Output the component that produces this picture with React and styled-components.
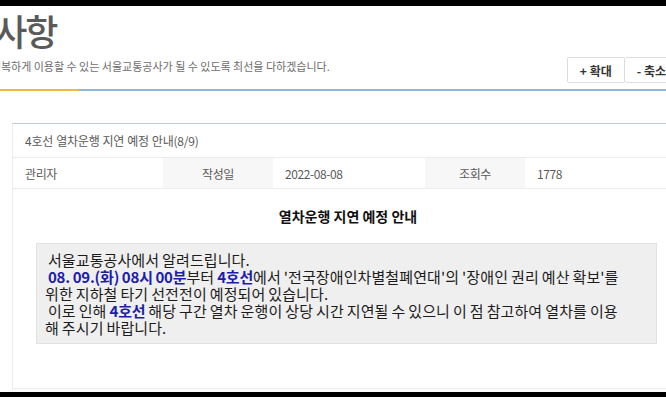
import React from 'react';
import styled, {createGlobalStyle} from "styled-components";

const palette = {
    ink: '#1c1c1c',
    grey: '#5a5a5a',
    soft: '#6d6d6d',
    line: '#ececec',
    orange: '#f2b54a',
    blue: '#8fb8d8',
    boardTop: '#bccbd8',
    accent: '#1d1daa',
};

const GlobalStyle = createGlobalStyle`
    html, body {
        margin: 0;
        background: #000;
    }
    body {
        font-family: "Noto Sans CJK KR", "Noto Sans", sans-serif;
        overflow: hidden;
    }
`;

const Frame = styled.div`
    width: 666px;
    height: 397px;
    display: flex;
    flex-direction: column;
    padding-top: 6px;
    padding-bottom: 5px;
    box-sizing: border-box;
    overflow: hidden;
`;

const Page = styled.div`
    flex: 1;
    background: #fff;
    display: flex;
    flex-direction: column;
    overflow: hidden;
`;

const Header = styled.div`
    display: flex;
    align-items: flex-start;
    justify-content: space-between;
    height: 83px;
`;

const TitleBlock = styled.div`
    display: flex;
    flex-direction: column;
    padding-top: 2px;
`;

const Title = styled.h1`
    margin: 0 0 0 ${({shift}) => shift}px;
    font-size: 36px;
    font-weight: 500;
    line-height: 44px;
    letter-spacing: -2px;
    color: ${palette.grey};
    white-space: nowrap;
`;

const Lead = styled.p`
    margin: 6px 0 0 ${({shift}) => shift}px;
    font-size: 11px;
    line-height: 16px;
    color: ${palette.soft};
    white-space: nowrap;
`;

const ZoomGroup = styled.div`
    display: flex;
    align-self: flex-end;
    margin-right: -13px;
    margin-bottom: 6px;
`;

const ZoomButton = styled.button`
    height: 26px;
    padding: 0 12px;
    background: #fff;
    border: 1px solid #dcdcdc;
    border-left-width: ${({first}) => (first ? 1 : 0)}px;
    border-radius: 2px;
    font-family: inherit;
    font-size: 12px;
    font-weight: 700;
    color: #333;
    white-space: nowrap;
`;

const Rule = styled.div`
    height: 2px;
    display: flex;
    background: ${palette.blue};
`;

const RuleMark = styled.div`
    width: 79px;
    background: ${palette.orange};
`;

const Board = styled.div`
    margin: 32px 0 0 12px;
    width: 670px;
    border-top: 1px solid ${palette.boardTop};
    border-left: 1px solid ${palette.line};
    display: flex;
    flex-direction: column;
`;

const Subject = styled.div`
    height: 33px;
    display: flex;
    align-items: center;
    padding-left: 12px;
    border-bottom: 1px solid ${palette.line};
    font-size: 12px;
    letter-spacing: -0.2px;
    word-spacing: 0.5px;
    color: ${palette.grey};
`;

const Meta = styled.div`
    display: grid;
    grid-template-columns: 150px 110px 152px 100px 1fr;
    height: 30px;
    border-bottom: 1px solid ${palette.line};
`;

const MetaCell = styled.div`
    display: flex;
    align-items: center;
    justify-content: ${({label}) => (label ? 'center' : 'flex-start')};
    padding-left: ${({label}) => (label ? 0 : 12)}px;
    background: ${({label}) => (label ? '#f7f7f7' : '#fff')};
    font-size: 12px;
    letter-spacing: -0.4px;
    color: ${palette.grey};
`;

const Body = styled.div`
    height: 200px;
    padding-top: 17px;
    box-sizing: border-box;
    border-bottom: 1px solid ${palette.line};
`;

const Heading = styled.h2`
    margin: 0;
    text-align: center;
    font-size: 14px;
    line-height: 20px;
    font-weight: 700;
    color: #111;
`;

const Notice = styled.div`
    margin: 17px 0 0 23px;
    width: 621px;
    box-sizing: border-box;
    padding: 7px 8px;
    background: #efefef;
    border: 1px solid #e2e2e2;
    font-size: 15px;
    line-height: 17px;
    letter-spacing: 0.1px;
    word-spacing: -0.5px;
    color: ${palette.ink};
    white-space: pre;
`;

const Strong = styled.b`
    color: ${palette.accent};
    font-weight: 700;
    letter-spacing: -0.2px;
`;

const App = () => (
    <Frame>
        <GlobalStyle/>
        <Page>
            <Header>
                <TitleBlock>
                    <Title shift={-68}>공지사항</Title>
                    <Lead shift={-85}>시민이 안전하고 행복하게 이용할 수 있는 서울교통공사가 될 수 있도록 최선을 다하겠습니다.</Lead>
                </TitleBlock>
                <ZoomGroup>
                    <ZoomButton first>+ 확대</ZoomButton>
                    <ZoomButton>- 축소</ZoomButton>
                </ZoomGroup>
            </Header>
            <Rule>
                <RuleMark/>
            </Rule>
            <Board>
                <Subject>4호선 열차운행 지연 예정 안내(8/9)</Subject>
                <Meta>
                    <MetaCell>관리자</MetaCell>
                    <MetaCell label>작성일</MetaCell>
                    <MetaCell>2022-08-08</MetaCell>
                    <MetaCell label>조회수</MetaCell>
                    <MetaCell>1778</MetaCell>
                </Meta>
                <Body>
                    <Heading>열차운행 지연 예정 안내</Heading>
                    <Notice>
                        {' 서울교통공사에서 알려드립니다.\n '}
                        <Strong>08. 09.(화) 08시 00분</Strong>부터 <Strong>4호선</Strong>
                        {"에서 '전국장애인차별철폐연대'의 '장애인 권리 예산 확보'를\n위한 지하철 타기 선전전이 예정되어 있습니다.\n 이로 인해 "}
                        <Strong>4호선</Strong>
                        {' 해당 구간 열차 운행이 상당 시간 지연될 수 있으니 이 점 참고하여 열차를 이용\n해 주시기 바랍니다.'}
                    </Notice>
                </Body>
            </Board>
        </Page>
    </Frame>
);

export default App;
